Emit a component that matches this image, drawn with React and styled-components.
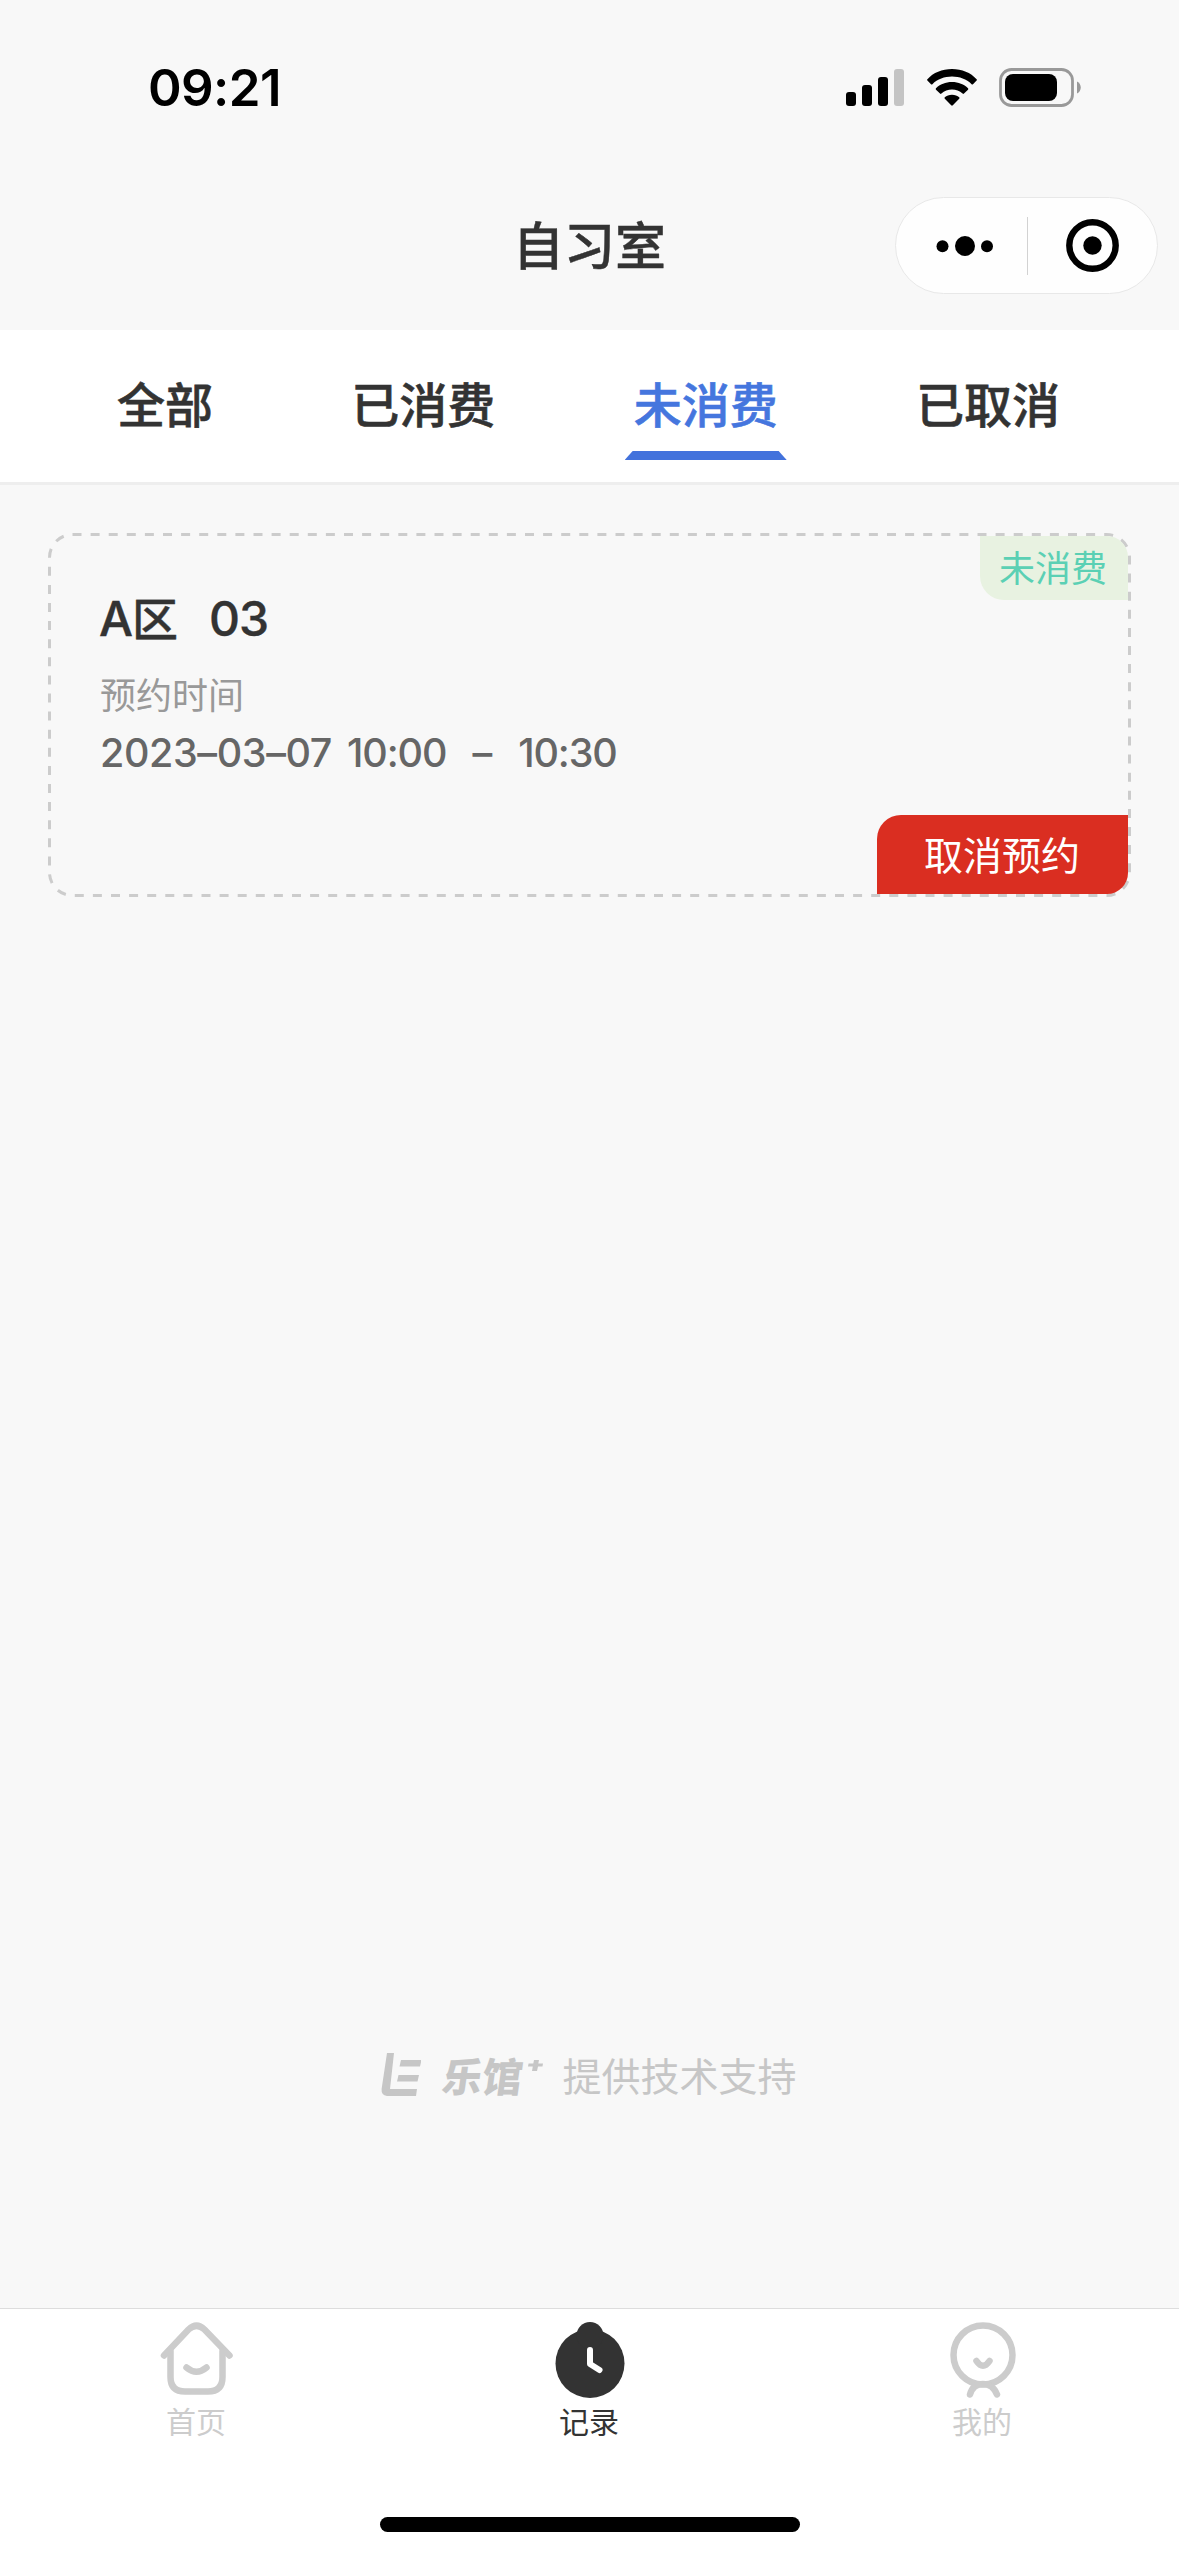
import React, { useState } from 'react';
import styled, { createGlobalStyle } from 'styled-components';

const GlobalStyle = createGlobalStyle`
  * {
    box-sizing: border-box;
  }
  body {
    margin: 0;
    background: #f8f8f8;
    font-family: "Noto Sans CJK SC", sans-serif;
    color: #333;
  }
  button {
    margin: 0;
    padding: 0;
    border: 0;
    background: none;
    font: inherit;
    color: inherit;
  }
`;

const Page = styled.div`
  display: flex;
  flex-direction: column;
  width: 1179px;
  height: 2556px;
  overflow: hidden;
  background: #f8f8f8;
`;

const StatusBar = styled.div`
  display: flex;
  justify-content: space-between;
  align-items: center;
  height: 175px;
  padding: 0 98px 0 148px;
`;

const Time = styled.span`
  font-family: Inter, sans-serif;
  font-size: 51px;
  font-weight: 600;
  line-height: 60px;
  letter-spacing: -0.6px;
  color: #000;
`;

const StatusIcons = styled.div`
  display: flex;
  align-items: center;
`;

const NavBar = styled.header`
  display: grid;
  grid-template-columns: 1fr auto 1fr;
  align-items: center;
  height: 155px;
  padding: 0 21px 14px;
`;

const Title = styled.h1`
  grid-column: 2;
  margin: 0;
  padding-bottom: 6px;
  font-size: 51px;
  font-weight: 500;
  line-height: 60px;
  -webkit-text-stroke: 0.4px;
`;

const Capsule = styled.div`
  display: flex;
  justify-self: end;
  align-items: center;
  width: 263px;
  height: 97px;
  border: 1px solid #e8e8e8;
  border-radius: 49px;
  background: #fefefe;
`;

const CapsuleButton = styled.button`
  display: flex;
  justify-content: center;
  align-items: center;
  width: 50%;
  height: 58px;

  &:first-child {
    padding-left: 7px;
  }

  & + & {
    border-left: 1px solid #d2d2d2;
  }
`;

const Tabs = styled.nav`
  display: flex;
  justify-content: space-between;
  height: 155px;
  padding: 0 110px 0 108px;
  border-bottom: 3px solid #eee;
  background: #fff;
`;

const Tab = styled.button`
  display: flex;
  flex-direction: column;
  padding: 42px 0 0;
  font-size: 48px;
  font-weight: 500;
  line-height: 60px;
  color: ${(props) => (props.$active ? '#4576de' : '#333')};
  -webkit-text-stroke: 0.6px;

  span {
    padding: 0 9px;
  }

  &::after {
    content: '';
    width: 100%;
    height: 9px;
    margin-top: 19px;
    background: ${(props) => (props.$active ? '#4272dc' : 'transparent')};
    clip-path: polygon(8px 0, calc(100% - 8px) 0, 100% 100%, 0 100%);
  }
`;

const Content = styled.main`
  display: flex;
  flex: 1;
  flex-direction: column;
  justify-content: space-between;
  padding: 48px 48px 206px;
`;

const Card = styled.article`
  position: relative;
  height: 364px;
  padding: 58px 52px;
`;

const Frame = styled.svg`
  position: absolute;
  inset: 0;
  width: 100%;
  height: 100%;
`;

const Seat = styled.h2`
  display: flex;
  align-items: center;
  height: 56px;
  margin: 0 0 0 -1px;
  font-size: 46px;
  font-weight: 500;
  line-height: 56px;
  -webkit-text-stroke: 0.4px;
`;

const Latin = styled.span`
  font-family: Inter, sans-serif;
  font-size: 48px;
  letter-spacing: -1px;
`;

const Zone = styled.span`
  margin: -7px 31px 0 0;
`;

const Label = styled.p`
  margin: 20px 0 0;
  font-size: 36px;
  line-height: 52px;
  color: #999;
`;

const Period = styled.p`
  display: flex;
  margin: 10px 0 0;
  font-family: Inter, sans-serif;
  font-size: 39.5px;
  font-weight: 500;
  line-height: 48px;
  color: #666;
`;

const Day = styled.span`
  margin-right: 15px;
  letter-spacing: -0.4px;
`;

const Clock = styled.span`
  letter-spacing: -1.1px;
`;

const Dash = styled.span`
  margin: 0 26px;
`;

const StatusTag = styled.span`
  position: absolute;
  top: 3px;
  right: 3px;
  width: 148px;
  height: 64px;
  border-radius: 0 21px 0 24px;
  background: #e8f2e1;
  font-size: 36px;
  line-height: 60px;
  text-align: center;
  text-indent: -2px;
  color: #5bd0b4;
`;

const CancelButton = styled.button`
  position: absolute;
  right: 3px;
  bottom: 3px;
  width: 251px;
  height: 79px;
  border-radius: 24px 0 21px 0;
  background: #da2e21;
  font-size: 39px;
  line-height: 75px;
  padding-bottom: 2px;
  text-indent: -1px;
  color: #fff;
`;

const Support = styled.footer`
  display: flex;
  justify-content: center;
  align-items: center;
  height: 56px;
  padding-right: 1px;
  font-size: 39px;
  line-height: 56px;
  color: #c6c6c6;
`;

const Brand = styled.span`
  margin: 1px 0 0 22px;
  font-size: 40px;
  font-weight: 900;
  transform: skewX(-8deg);
`;

const TabBar = styled.nav`
  display: grid;
  grid-template-columns: repeat(3, 1fr);
  height: 196px;
  border-top: 1px solid #ddd;
  background: #fff;
`;

const TabBarItem = styled.button`
  display: flex;
  flex-direction: column;
  align-items: center;
  padding-top: 13px;
  font-size: 30px;
  line-height: 44px;
  color: ${(props) => (props.$active ? '#333' : '#ccc')};

  span {
    padding-right: 1px;
  }
`;

const HomeIndicator = styled.div`
  display: flex;
  justify-content: center;
  height: 52px;
  padding-top: 13px;
  background: #fff;

  &::before {
    content: '';
    width: 420px;
    height: 15px;
    border-radius: 8px;
    background: #000;
  }
`;

const WifiSvg = styled.svg`
  margin: 0 22px 0 22px;
`;

const MarkSvg = styled.svg`
  margin-top: 2px;
`;

const PlusSvg = styled.svg`
  margin: -16px 19px 0 5px;
`;

const SignalIcon = () => (
  <svg width="59" height="38" viewBox="0 0 59 38">
    <rect x="0" y="23" width="10" height="14" rx="3" />
    <rect x="16" y="16" width="10" height="21" rx="3" />
    <rect x="32" y="8" width="10" height="29" rx="3" />
    <rect x="48" y="0" width="10" height="37" rx="3" fill="#c4c4c4" />
  </svg>
);

const WifiIcon = () => (
  <WifiSvg width="50" height="38" viewBox="0 0 50 38">
    <path d="M25 0C35 0 43.700 3.700 49.600 10.200Q50.200 10.900 49.600 11.600L46 15.200Q45.300 15.800 44.600 15.200C39.500 10.300 32.500 7.600 25 7.600S10.500 10.300 5.400 15.200Q4.700 15.800 4 15.200L.4 11.600Q-.2 10.900 .4 10.200C6.300 3.700 15 0 25 0Z" />
    <path d="M25 13C31.500 13 37 15.300 41 19.200Q41.700 20 41 20.700L37 24.600Q36.300 25.200 35.600 24.600C32.600 22 29 20.500 25 20.500S17.400 22 14.400 24.600Q13.700 25.200 13 24.600L9 20.700Q8.300 20 9 19.200C13 15.300 18.500 13 25 13Z" />
    <path d="M25 25.700C28 25.700 30.400 26.600 32.200 28.200Q32.900 29 32.200 29.700L25.800 36.300Q25 37.100 24.200 36.300L17.800 29.700Q17.100 29 17.800 28.200C19.600 26.600 22 25.700 25 25.700Z" />
  </WifiSvg>
);

const BatteryIcon = () => (
  <svg width="82" height="39" viewBox="0 0 82 39">
    <rect x="1.500" y="1.500" width="72" height="36" rx="11" fill="none" stroke="#999" strokeWidth="2.800" />
    <rect x="6" y="6" width="52" height="27" rx="8" />
    <path d="M78 13.500c5 2 5 10 0 12z" fill="#999" />
  </svg>
);

const MoreIcon = () => (
  <svg width="58" height="20" viewBox="0 0 58 20">
    <circle cx="6.500" cy="10.300" r="6" />
    <circle cx="29" cy="10" r="10" />
    <circle cx="51" cy="10.300" r="6" />
  </svg>
);

const CloseIcon = () => (
  <svg width="53" height="53" viewBox="0 0 53 53">
    <circle cx="26.500" cy="26.500" r="23.200" fill="none" stroke="#000" strokeWidth="6.400" />
    <circle cx="26.500" cy="26.500" r="9.200" />
  </svg>
);

const BrandMark = () => (
  <MarkSvg width="40" height="44" viewBox="0 0 40 44" fill="currentColor">
    <path d="M6 0h7L9 36h27l-1 7H6Q0 42 .6 36Z" />
    <path d="M20 7h20.500l-1.500 6.500H18.500zM17.500 22H38l-1.500 6.500H16z" />
  </MarkSvg>
);

const BrandPlus = () => (
  <PlusSvg width="15" height="12" viewBox="0 0 15 12" fill="currentColor">
    <path d="M6 0h5l-.7 3.500H15l-.5 3H10L9 11H4l.8-4.500H0l.6-3h4.700z" />
  </PlusSvg>
);

const HomeIcon = () => (
  <svg width="74" height="76" viewBox="0 0 74 76" fill="none" stroke="#ccc" strokeWidth="6.500" strokeLinecap="round">
    <path d="M4 33.500L28.500 7.500Q36.500 0 44.500 7.500L69.500 33.500" />
    <path d="M10.500 29V55Q10.500 69.500 25 69.500H48Q62.500 69.500 62.500 55V29" />
    <path d="M26.500 45.500Q36.500 54 46.500 45.500" />
  </svg>
);

const RecordIcon = () => (
  <svg width="74" height="76" viewBox="0 0 74 76">
    <circle cx="37" cy="41.500" r="34.500" fill="#333" />
    <circle cx="37" cy="13.500" r="13.500" fill="#333" />
    <path d="M37 28V42L46.500 48" fill="none" stroke="#fff" strokeWidth="6" strokeLinecap="round" strokeLinejoin="round" />
  </svg>
);

const MineIcon = () => (
  <svg width="74" height="76" viewBox="0 0 74 76" fill="none" stroke="#ccc" strokeWidth="6.500" strokeLinecap="round">
    <circle cx="37" cy="33" r="29.500" />
    <path d="M30.500 39Q37 48.500 43.500 39" />
    <path d="M24 72.500C26 65 31 62 37 62S48 65 51 72.500" />
  </svg>
);

// css dashes are too short, so the card outline is stroked by hand
const DashedFrame = () => (
  <Frame viewBox="0 0 1083 364" fill="none" stroke="#ccc" strokeWidth="3" strokeDasharray="9 9.1">
    <rect x="1.500" y="1.500" width="1080" height="361" rx="23" />
  </Frame>
);

const tabs = ['全部', '已消费', '未消费', '已取消'];

const tabBar = [
  { label: '首页', icon: <HomeIcon /> },
  { label: '记录', icon: <RecordIcon /> },
  { label: '我的', icon: <MineIcon /> },
];

const App = () => {
  const [tab, setTab] = useState('未消费');
  const [page, setPage] = useState('记录');

  return (
    <Page>
      <GlobalStyle />
      <StatusBar>
        <Time>09:21</Time>
        <StatusIcons>
          <SignalIcon />
          <WifiIcon />
          <BatteryIcon />
        </StatusIcons>
      </StatusBar>
      <NavBar>
        <Title>自习室</Title>
        <Capsule>
          <CapsuleButton><MoreIcon /></CapsuleButton>
          <CapsuleButton><CloseIcon /></CapsuleButton>
        </Capsule>
      </NavBar>
      <Tabs>
        {tabs.map((name) => (
          <Tab key={name} $active={name === tab} onClick={() => setTab(name)}>
            <span>{name}</span>
          </Tab>
        ))}
      </Tabs>
      <Content>
        <Card>
          <DashedFrame />
          <Seat>
            <Latin>A</Latin>
            <Zone>区</Zone>
            <Latin>03</Latin>
          </Seat>
          <Label>预约时间</Label>
          <Period>
            <Day>2023–03–07</Day>
            <Clock>10:00</Clock>
            <Dash>–</Dash>
            <Clock>10:30</Clock>
          </Period>
          <StatusTag>未消费</StatusTag>
          <CancelButton>取消预约</CancelButton>
        </Card>
        <Support>
          <BrandMark />
          <Brand>乐馆</Brand>
          <BrandPlus />
          提供技术支持
        </Support>
      </Content>
      <TabBar>
        {tabBar.map(({ label, icon }) => (
          <TabBarItem key={label} $active={label === page} onClick={() => setPage(label)}>
            {icon}
            <span>{label}</span>
          </TabBarItem>
        ))}
      </TabBar>
      <HomeIndicator />
    </Page>
  );
};

export default App;
